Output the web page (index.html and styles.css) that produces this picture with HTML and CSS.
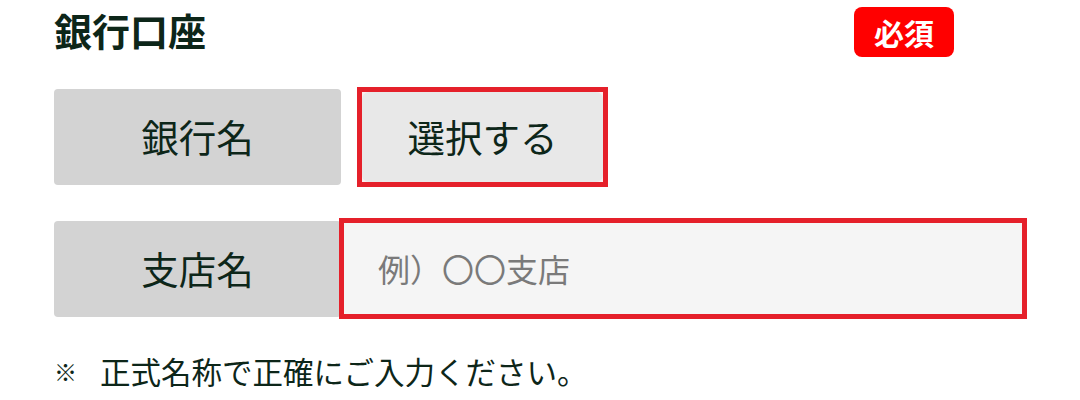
FILE: index.html
```html
<!DOCTYPE html>
<html lang="ja">
<head>
<meta charset="utf-8">
<title>銀行口座</title>
<link rel="stylesheet" href="styles.css">
</head>
<body>
<div class="form">
  <div class="head">
    <h2 class="title">銀行口座</h2>
    <span class="badge">必須</span>
  </div>
  <div class="row row-bank">
    <div class="label">銀行名</div>
    <button class="select" type="button"><span class="select-face">選択する</span></button>
  </div>
  <div class="row row-branch">
    <div class="label">支店名</div>
    <input class="text-input" type="text" placeholder="例）〇〇支店">
  </div>
  <p class="note"><span class="mark">※</span><span>正式名称で正確にご入力ください。</span></p>
</div>
</body>
</html>
```

FILE: styles.css
```css
html, body {
  margin: 0;
  padding: 0;
  background: #ffffff;
}
body {
  font-family: "Noto Sans CJK JP", "Noto Sans", sans-serif;
  color: #0d2619;
}
.form {
  padding: 7px 0 0 54px;
}
.head {
  display: flex;
  align-items: center;
  justify-content: space-between;
  width: 900px;
  height: 50px;
}
.title {
  margin: 0 0 4px 0;
  font-size: 38px;
  font-weight: 700;
  line-height: 1;
}
.badge {
  display: flex;
  align-items: center;
  justify-content: center;
  width: 100px;
  height: 50px;
  border-radius: 8px;
  background: #ff0000;
  color: #ffffff;
  font-size: 30px;
  font-weight: 700;
  line-height: 1;
}
.row {
  display: flex;
  align-items: center;
}
.row-bank {
  margin-top: 30px;
}
.row-branch {
  margin-top: 31px;
}
.label {
  display: flex;
  align-items: center;
  justify-content: center;
  width: 287px;
  height: 96px;
  background: #d3d3d3;
  border-radius: 4px;
  font-size: 37.5px;
  line-height: 1;
  padding-bottom: 2px;
  box-sizing: border-box;
}
.select {
  display: flex;
  margin: 0 0 0 16px;
  width: 251px;
  height: 100px;
  box-sizing: border-box;
  border: 5px solid #e5202a;
  background: #fbeeee;
  border-radius: 0;
  padding: 0;
  font-family: inherit;
  cursor: pointer;
}
.select-face {
  flex: 1;
  display: flex;
  align-items: center;
  justify-content: center;
  background: #e8e8e8;
  border-radius: 7px;
  font-size: 37.5px;
  line-height: 1;
  color: #0d2619;
  padding-bottom: 2px;
}
.text-input {
  margin: 0 0 0 -2px;
  width: 688px;
  height: 101px;
  box-sizing: border-box;
  border: 5px solid #e5202a;
  background: #f5f5f5;
  padding: 0 0 2px 34px;
  font-family: inherit;
  font-size: 32px;
  color: #0d2619;
  outline: none;
}
.text-input::placeholder {
  color: #7a7a7a;
}
.note {
  display: flex;
  align-items: center;
  margin: 37px 0 0 0;
  font-size: 30.5px;
  line-height: 1;
}
.mark {
  width: 46px;
  font-size: 23px;
}
```
